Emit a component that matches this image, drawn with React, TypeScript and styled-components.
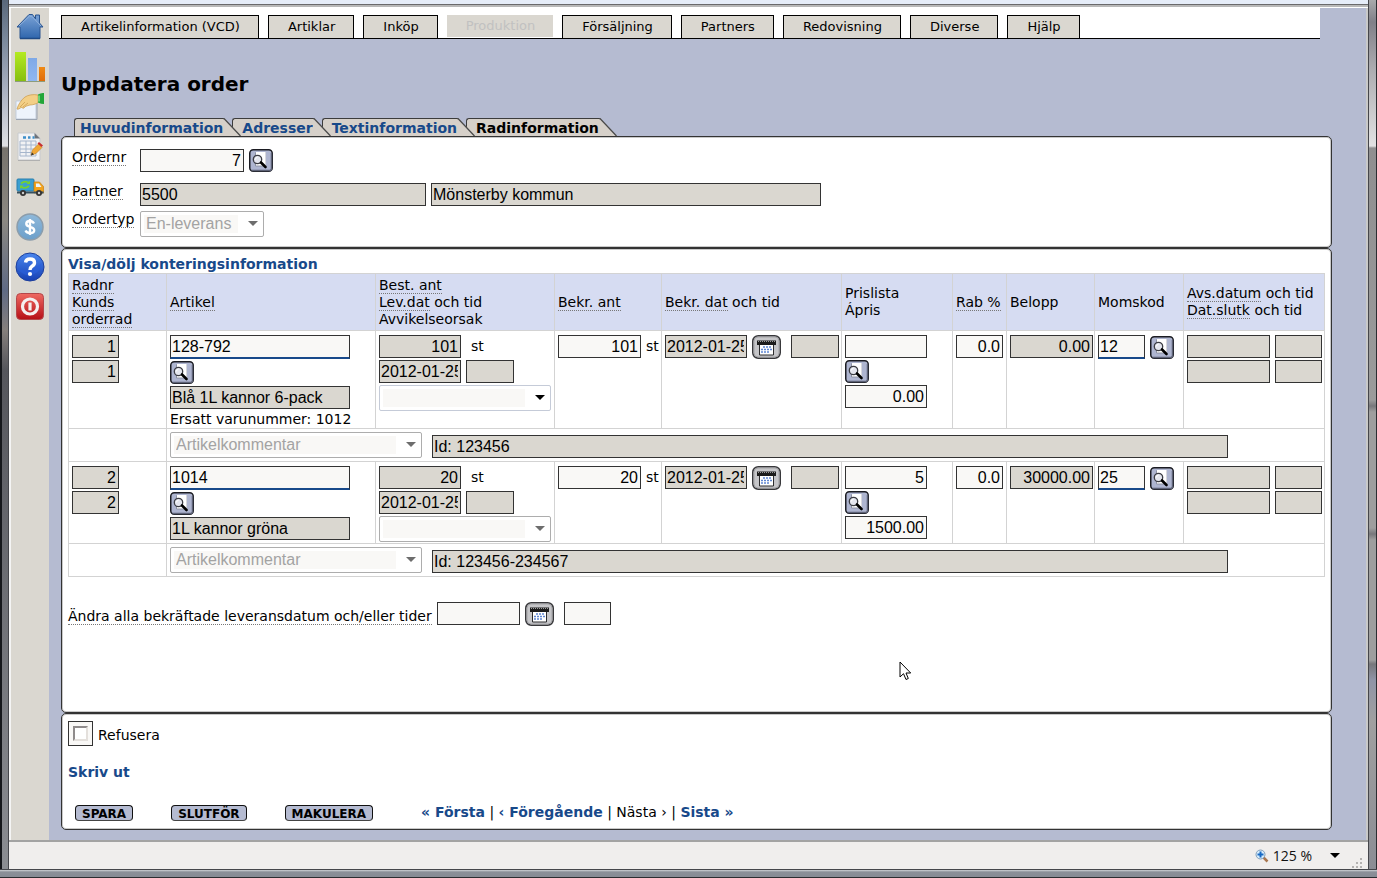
import React from "react";
import styled, { createGlobalStyle, css } from "styled-components";

const color = {
  page: "#b5bbd1",
  beige: "#dad7d0",
  field: "#f9f8f6",
  line: "#d3d3d3",
  dark: "#333333",
  link: "#18498a",
  head: "#d6dcf2",
};

const uiFont = '"DejaVu Sans", Verdana, sans-serif';
const fieldFont = '"Liberation Sans", Arial, sans-serif';

const GlobalStyle = createGlobalStyle`
  * { box-sizing: border-box; }
  body { margin: 0; background: #8b8f98; color: #000; font: 14px/17px ${uiFont}; }
  button, input, select { margin: 0; }
`;

/* ---------- window frame ---------- */

const Frame = styled.div`
  min-height: 100vh;
  min-width: 1377px;
  display: grid;
  grid-template-columns: 9px minmax(0, 1fr) 9px;
  grid-template-rows: 1fr 9px;
`;

const LeftEdge = styled.div`
  border-left: 2px solid #15171b;
  border-right: 1px solid #45464b;
  background: linear-gradient(#59677a 0, #7b899c 40px, #a9b0c0 90px, #dfe0e4 146px, #77736d 148px, #8b8882 220px, #5f6a84 290px, #857f7c 330px, #55565c 370px, #8b8d92 100%);
`;

const RightEdge = styled.div`
  border-left: 1px solid #45464b;
  border-right: 1px solid #2c2d31;
  background: linear-gradient(#a9a9ab 0, #808088 22px, #adadb1 70px, #e2e2e3 146px, #8f8f90 148px, #9b9b9b 400px, #77777b 406px, #9e9e9e 412px, #9e9e9e 528px, #77777b 534px, #9e9e9e 540px, #9e9e9e 660px, #77777b 664px, #8f94a6 680px, #a0a0a0 720px, #8b8d94 100%);
`;

const BottomEdge = styled.div`
  grid-column: 1 / -1;
  border-top: 1px solid #45464b;
  border-bottom: 1px solid #2c2d31;
  background: linear-gradient(#d0d2d6 0, #8b8f98 2px, #878b94 100%);
`;

const Viewport = styled.div`
  display: flex;
  flex-direction: column;
  background: #f0eeed;
`;

const ToolbarEdge = styled.div`
  height: 8px;
  background: linear-gradient(#e6edf9 0 4px, #6a6a6c 4px 5px, #b9b9b9 5px 7px, #fff 7px);
`;

const Body = styled.div`
  flex: 1;
  display: flex;
  background: ${color.page};
  border-left: 2px solid #f4f4f4;
  border-right: 2px solid #c9c9c9;
`;

const StatusBar = styled.footer`
  height: 29px;
  display: flex;
  align-items: center;
  justify-content: flex-end;
  padding-right: 4px;
  border-top: 2px solid #a3a3a3;
`;

const ZoomButton = styled.button`
  display: flex;
  align-items: center;
  gap: 4px;
  padding: 0;
  border: 0;
  background: none;
  font: 14px/20px "Open Sans", "Noto Sans", sans-serif;
  color: #111;

  svg:last-child { margin-left: 14px; }
`;

const Grip = styled.svg`
  align-self: flex-end;
  margin-left: 12px;
`;

/* ---------- left icon bar ---------- */

const Sidebar = styled.nav`
  flex: none;
  width: 38px;
  display: flex;
  flex-direction: column;
  background: ${color.beige};
`;

const SideLink = styled.a`
  height: 40px;
  display: flex;
  justify-content: center;
  padding-top: 4px;
`;

/* ---------- top menu ---------- */

const Main = styled.main`
  flex: 1;
  min-width: 0;
  display: flex;
  flex-direction: column;
`;

const Menu = styled.nav`
  display: flex;
  align-items: flex-end;
  gap: 9px;
  height: 31px;
  margin-right: 46px;
  padding-left: 12px;
  background: #fff;
  border-bottom: 1px solid #000;
`;

const MenuButton = styled.button`
  height: 23px;
  padding: 0 18px 0 19px;
  border: 1px solid #000;
  border-bottom: 0;
  background: ${color.beige};
  color: #000;
  font: 13px/20px ${uiFont};

  &:disabled {
    margin-bottom: 1px;
    height: 22px;
    border: 0;
    color: #c1c1c1;
  }
`;

const Content = styled.div`
  flex: 1;
  display: flex;
  flex-direction: column;
  padding: 32px 34px 10px 12px;
`;

const Title = styled.h1`
  margin: 0 0 21px;
  font: bold 20px/26px ${uiFont};
`;

/* ---------- tabs ---------- */

const Tabs = styled.div`
  display: flex;
  padding-left: 13px;
`;

const Tab = styled.a<{ $order: number; $active?: boolean }>`
  position: relative;
  z-index: ${(p) => p.$order};
  display: flex;
  height: 18px;
  margin-right: -9px;
  color: ${(p) => (p.$active ? "#000" : color.link)};
  font: bold 14px/19px ${uiFont};
  text-decoration: none;
  white-space: nowrap;
`;

const TabBody = styled.span<{ $first?: boolean }>`
  padding-left: ${(p) => (p.$first ? 5 : 9)}px;
  border-top: 1px solid #3c3c3c;
  border-left: 1px solid #3c3c3c;
  border-top-left-radius: 3px;
  background: #d6d0c9;
`;

/* ---------- panels ---------- */

const Panel = styled.section<{ $grow?: boolean }>`
  flex: ${(p) => (p.$grow ? "1 0 auto" : "none")};
  border: 1px solid ${color.dark};
  border-radius: 5px;
  background: #fff;
  box-shadow: inset 0 0 0 1px #c9c9c9;
`;

const OrderPanel = styled(Panel)`
  display: grid;
  grid-template-columns: 68px 1fr;
  align-items: start;
  padding: 12px 10px 10px;
`;

const RowsPanel = styled(Panel)`
  padding: 7px 6px 0;
`;

const ActionPanel = styled(Panel)`
  padding: 7px 6px 8px;
`;

const Line = styled.div<{ $space?: number }>`
  display: flex;
  align-items: center;
  gap: 5px;
  margin-bottom: ${(p) => p.$space ?? 0}px;
`;

const Term = styled.span`
  border-bottom: 1px dotted #777;
`;

const TermLabel = styled.label`
  border-bottom: 1px dotted #777;
  justify-self: start;
  line-height: 16px;
`;

const TextLink = styled.a`
  color: ${color.link};
  font-weight: bold;
  text-decoration: none;
`;

/* ---------- form controls ---------- */

const Field = styled.input<{ $w: number; $right?: boolean; $key?: boolean }>`
  flex: none;
  display: block;
  width: ${(p) => p.$w}px;
  height: 23px;
  padding: 0 2px 0 1px;
  border: 1px solid ${color.dark};
  border-radius: 0;
  outline: 0;
  background: ${color.field};
  color: #000;
  font: 16px/20px ${fieldFont};
  text-align: ${(p) => (p.$right ? "right" : "left")};

  &:read-only { background: ${color.beige}; }

  ${(p) =>
    p.$key &&
    css`
      height: 24px;
      border-bottom: 2px solid ${color.link};
    `}
`;

const SelectBox = styled.span<{ $w: number }>`
  flex: none;
  position: relative;
  display: block;
  width: ${(p) => p.$w}px;
  height: 26px;

  svg {
    position: absolute;
    right: 6px;
    top: 10px;
    pointer-events: none;
  }
`;

const Select = styled.select`
  appearance: none;
  width: 100%;
  height: 100%;
  padding: 0 26px 0 5px;
  border: 1px solid #c5cbd8;
  border-radius: 2px;
  background: linear-gradient(${color.field}, ${color.field}) no-repeat 3px 3px / calc(100% - 28px) calc(100% - 6px) #fff;
  color: #000;
  font: 16px/20px ${fieldFont};

  &:disabled {
    border-color: #adadad;
    color: #a3a3a3;
    opacity: 1;
  }
`;

const IconButton = styled.button`
  flex: none;
  display: block;
  height: 23px;
  padding: 0;
  border: 0;
  background: none;

  svg { display: block; }
`;

const CalendarSlot = styled.span`
  margin-right: 5px;
`;

const ActionButton = styled.button`
  height: 16px;
  padding: 1px 6px 0;
  border: 1px solid #111;
  border-bottom-color: #444;
  border-radius: 4px;
  background: ${color.page};
  color: #000;
  font: bold 12px/14px ${uiFont};
`;

const Buttons = styled.div`
  display: flex;
  align-items: center;
  padding-left: 7px;

  ${ActionButton} + ${ActionButton} { margin-left: 38px; }
`;

const Pager = styled.nav`
  margin-left: 48px;
  white-space: pre;
`;

const CheckFrame = styled.span`
  width: 25px;
  height: 25px;
  display: flex;
  justify-content: center;
  padding-top: 4px;
  border: 1px solid ${color.dark};
  background: ${color.field};
`;

const CheckText = styled.span`
  padding-top: 4px;
`;

const Check = styled.input`
  appearance: none;
  width: 15px;
  height: 15px;
  border: 2px solid #e4e0dc;
  border-top-color: #8f8b8b;
  border-left-color: #8f8b8b;
  background: #fff;
`;

/* ---------- order row table ---------- */

const Table = styled.table`
  width: 100%;
  table-layout: fixed;
  border-collapse: collapse;
`;

const Col = styled.col<{ $w?: number }>`
  width: ${(p) => (p.$w ? `${p.$w}px` : "auto")};
`;

const Th = styled.th`
  height: 57px;
  padding: 1px 0 1px 3px;
  border: 1px solid ${color.line};
  background: ${color.head};
  font-weight: normal;
  text-align: left;
  white-space: nowrap;
`;

const Td = styled.td`
  padding: 4px 0 1px 3px;
  border: 1px solid ${color.line};
  vertical-align: top;
  white-space: nowrap;
`;

const CommentTd = styled(Td)`
  padding: 3px 0 3px 3px;
`;

const Stack = styled.div`
  display: flex;
  flex-direction: column;
  align-items: flex-start;
  gap: 2px;
`;

const CommentLine = styled.div`
  display: flex;
  align-items: flex-end;
  gap: 10px;
`;

const Note = styled.span`
  line-height: 16px;
`;

const Unit = styled.span<{ $wide?: boolean }>`
  padding-left: ${(p) => (p.$wide ? 5 : 0)}px;
`;

const BulkLine = styled(Line)`
  margin: 25px 0 78px;

  ${TermLabel} { margin-top: 6px; }
`;

const Cursor = styled.svg`
  position: absolute;
  left: 899px;
  top: 661px;
  pointer-events: none;
`;

/* ---------- drawings ---------- */

const SearchIcon = () => (
  <svg width="24" height="23" viewBox="0 0 24 23" aria-hidden="true">
    <rect x=".75" y=".75" width="22.500" height="21.500" rx="3.500" fill="#aeb5d0" stroke="#1b1c22" strokeWidth="1.500" />
    <path d="M2.500 21.500h18q2 0 2-2V4" fill="none" stroke="#5d6276" strokeWidth="1.500" />
    <rect x="7" y="3" width="10" height="14" fill="#fff" />
    <path d="M6.500 3.500v13.500h8" fill="none" stroke="#8d92a2" />
    <path d="M16.500 3v13" stroke="#d8d8dc" />
    <circle cx="8.500" cy="10.500" r="4.200" fill="#e4e6ee" stroke="#3c3d44" strokeWidth="1.300" />
    <path d="M6.300 10.500q.2-2 2.200-2.200" stroke="#fff" fill="none" />
    <path d="M12 13.500l4.500 4.500" stroke="#000" strokeWidth="2.600" strokeLinecap="round" />
  </svg>
);

const CalendarIcon = () => (
  <svg width="29" height="24" viewBox="0 0 29 24" aria-hidden="true">
    <rect x=".75" y=".75" width="27.500" height="22.500" rx="5.500" fill="#c6c6c9" stroke="#38383b" strokeWidth="1.500" />
    <rect x="2" y="2" width="25" height="20" rx="4" fill="none" stroke="#a3a3a6" />
    <path d="M7.500 9h14v11h-14z" fill="#fff" stroke="#2c2c2e" />
    <path d="M5 5.500h19v4.500H5z" fill="#1c1c1c" />
    <path d="M6 6.500h17" stroke="#9c9c9c" strokeDasharray="1 1" />
    <path d="M11 12h9M9 14.500h11M9 17h9" stroke="#5f86d2" strokeWidth="1.500" strokeDasharray="2 1" />
  </svg>
);

const Arrow = ({ fill }: { fill: string }) => (
  <svg width="10" height="5" viewBox="0 0 10 5" aria-hidden="true">
    <path d="M0 0h10L5 5z" fill={fill} />
  </svg>
);

const Gradient = ({ id, from, to }: { id: string; from: string; to: string }) => (
  <linearGradient id={id} x1="0" y1="0" x2="0" y2="1">
    <stop offset="0" stopColor={from} />
    <stop offset="1" stopColor={to} />
  </linearGradient>
);

const sideIcons: { label: string; art: React.ReactNode }[] = [
  {
    label: "Hem",
    art: (
      <>
        <defs><Gradient id="home" from="#7ba3d6" to="#2f66ad" /></defs>
        <path d="M14 2.500L2 15h3v11.500h20V15h3l-3.500-4V3h-4v4l-3-4.500z" fill="url(#home)" stroke="#2a5590" strokeLinejoin="round" />
        <path d="M5 26.500h20" stroke="#1f4a85" strokeWidth="1.500" />
        <path d="M4 14L14.500 4l3 1L26 14" stroke="#8fb1dd" fill="none" />
      </>
    ),
  },
  {
    label: "Statistik",
    art: (
      <>
        <defs>
          <Gradient id="green" from="#b4ea22" to="#86bf10" />
          <Gradient id="blue" from="#7fa9e6" to="#8fb7f2" />
          <Gradient id="orange" from="#f08a14" to="#e06c08" />
        </defs>
        <rect x="0" y="0" width="11" height="29" fill="url(#green)" />
        <rect x="13" y="6" width="9" height="23" fill="url(#blue)" />
        <rect x="24" y="15" width="6" height="14" fill="url(#orange)" />
        <path d="M0 29.500h30" stroke="#8d9c7c" />
      </>
    ),
  },
  {
    label: "Partners",
    art: (
      <>
        <path d="M1 9h20v18H1z" fill="#eef4fc" stroke="#c3cddb" />
        <path d="M1 27.500h21V12" fill="none" stroke="#9aa4b2" />
        <path d="M2 17c1-4 4-9 8-12 3-2 8-3 13-2v8c-3 1-5 2-8 2-3 1-5 1-6 3-2 1-2-1-2-1-2 1-4 3-5 2z" fill="#f3cf86" stroke="#c99a4b" strokeWidth=".7" />
        <path d="M5 15l5-5M8 15l5-4" stroke="#c99a4b" strokeWidth=".7" />
        <path d="M23 2.500q3-2 6-1.500v11q-3 0-6-1.500z" fill="#23a637" />
        <path d="M24 3.500v6" stroke="#8be08e" strokeWidth="1.500" />
      </>
    ),
  },
  {
    label: "Order",
    art: (
      <>
        <path d="M3 1h17l5 5v22H3z" fill="#f1f2f4" stroke="#c8cacd" />
        <path d="M19.500 1l5.500 5.500h-5.500z" fill="#6e7278" />
        <path d="M3 28.500h22" stroke="#b0b0b0" />
        <path d="M5 9h16v15H5zM5 13h16M5 17h16M5 20.500h16M11 9v15M16 9v15" fill="none" stroke="#a6b6cc" />
        <path d="M8 5.500h3M13 5.500h2.500M17.500 5.500h2" stroke="#3d8fc9" strokeWidth="2.500" />
        <path d="M16 23l1.500-5 6-6 3.500 3.500-6 6z" fill="#f0a735" stroke="#c57f1d" strokeWidth=".6" />
        <path d="M22.500 11.500L24 10l4 3.500-1.500 1.500z" fill="#c72f2f" />
        <path d="M16 23.500l1-3 2 2z" fill="#333" />
      </>
    ),
  },
  {
    label: "Leverans",
    art: (
      <>
        <rect x="2" y="7" width="17" height="12" rx="1" fill="#3b9fd0" stroke="#2a7fae" />
        <path d="M19 10h5.500l4 4.500V21H19z" fill="#f2a31c" stroke="#c98112" strokeWidth=".7" />
        <path d="M21 11.500h3l2.500 3.500H21z" fill="#e9f4fb" />
        <path d="M2 19.500h26.500v2H2z" fill="#36505f" />
        <path d="M6 11.500q4-3.500 8-.5M14 14q-4 3.500-8 .5" fill="none" stroke="#75d131" strokeWidth="1.800" />
        <path d="M15 8.500v3.500h-3.500zM5 17v-3.500h3.500z" fill="#75d131" />
        <circle cx="8" cy="21" r="3" fill="#333" /><circle cx="8" cy="21" r="1.200" fill="#ccc" />
        <circle cx="24" cy="21" r="3" fill="#333" /><circle cx="24" cy="21" r="1.200" fill="#ccc" />
      </>
    ),
  },
  {
    label: "Redovisning",
    art: (
      <>
        <defs><Gradient id="coin" from="#8fb9da" to="#6c9fca" /></defs>
        <circle cx="15" cy="15" r="13" fill="url(#coin)" stroke="#8c9dab" strokeWidth="1.500" />
        <path d="M19 11.500q-1.500-2.500-4-2.500-3.700 0-3.700 2.800 0 2.200 3.700 3 4.200.9 4.200 3.400 0 2.800-4.200 2.800-3.300 0-4.500-2.500M15 7v16" fill="none" stroke="#fff" strokeWidth="2.400" />
      </>
    ),
  },
  {
    label: "Hjälp",
    art: (
      <>
        <defs><Gradient id="help" from="#4a86ee" to="#1740b4" /></defs>
        <circle cx="15" cy="15" r="14" fill="url(#help)" stroke="#1d3f9c" />
        <path d="M3 17Q14 21 27 11a13 13 0 0 1-24 6z" fill="#2a5fdc" opacity=".6" />
        <path d="M10.500 10.500q.5-3.500 4.500-3.500 4.500 0 4.500 3.700 0 2-2.500 3.500-2 1.300-2 3.800" fill="none" stroke="#fff" strokeWidth="3.400" />
        <circle cx="15" cy="22" r="2.100" fill="#fff" />
      </>
    ),
  },
  {
    label: "Logga ut",
    art: (
      <>
        <defs><Gradient id="power" from="#ee6a62" to="#b60f16" /></defs>
        <rect x="1.500" y="1.500" width="27" height="26" rx="4" fill="url(#power)" stroke="#b4474a" />
        <circle cx="15" cy="14.500" r="7.500" fill="none" stroke="#f4efef" strokeWidth="3.200" />
        <path d="M15 10.500v8" stroke="#f4efef" strokeWidth="3.200" />
      </>
    ),
  },
];

/* ---------- data ---------- */

const menuItems = [
  "Artikelinformation (VCD)", "Artiklar", "Inköp", "Produktion", "Försäljning",
  "Partners", "Redovisning", "Diverse", "Hjälp",
];

const tabs = ["Huvudinformation", "Adresser", "Textinformation", "Radinformation"];

const columnWidths = [98, 209, 179, 107, 180, 111, 54, 88, 89, undefined];

interface OrderRow {
  nr: string; item: string; name: string; note?: string; qty: string; date: string;
  reasonLocked: boolean; priceList: string; price: string; discount: string;
  amount: string; vat: string; comment: string;
}

const rows: OrderRow[] = [
  {
    nr: "1", item: "128-792", name: "Blå 1L kannor 6-pack", note: "Ersatt varunummer: 1012",
    qty: "101", date: "2012-01-25", reasonLocked: false, priceList: "", price: "0.00",
    discount: "0.0", amount: "0.00", vat: "12", comment: "Id: 123456",
  },
  {
    nr: "2", item: "1014", name: "1L kannor gröna", qty: "20", date: "2012-01-25",
    reasonLocked: true, priceList: "5", price: "1500.00", discount: "0.0",
    amount: "30000.00", vat: "25", comment: "Id: 123456-234567",
  },
];

/* ---------- pieces ---------- */

interface DropdownProps { id?: string; label?: string; width: number; value: string; disabled?: boolean }

const Dropdown = ({ id, label, width, value, disabled }: DropdownProps) => (
  <SelectBox $w={width}>
    <Select id={id} aria-label={label} disabled={disabled}>
      <option>{value}</option>
    </Select>
    <Arrow fill={disabled ? "#6d6d6d" : "#000"} />
  </SelectBox>
);

const SearchButton = ({ label }: { label: string }) => (
  <IconButton type="button" aria-label={label}><SearchIcon /></IconButton>
);

const CalendarButton = () => (
  <CalendarSlot>
    <IconButton type="button" aria-label="Välj datum"><CalendarIcon /></IconButton>
  </CalendarSlot>
);

const OrderRowView = ({ row }: { row: OrderRow }) => (
  <>
    <tr>
      <Td>
        <Stack>
          <Field $w={47} $right readOnly aria-label="Radnr" defaultValue={row.nr} />
          <Field $w={47} $right readOnly aria-label="Kunds orderrad" defaultValue={row.nr} />
        </Stack>
      </Td>
      <Td>
        <Stack>
          <Field $w={180} $key aria-label="Artikel" defaultValue={row.item} />
          <SearchButton label="Sök artikel" />
          <Field $w={180} readOnly aria-label="Benämning" defaultValue={row.name} />
          {row.note && <Note>{row.note}</Note>}
        </Stack>
      </Td>
      <Td>
        <Stack>
          <Line>
            <Field $w={82} $right readOnly aria-label="Best. ant" defaultValue={row.qty} />
            <Unit $wide>st</Unit>
          </Line>
          <Line>
            <Field $w={82} readOnly aria-label="Lev.dat" defaultValue={row.date} />
            <Field $w={48} readOnly aria-label="Lev.tid" />
          </Line>
          <Dropdown label="Avvikelseorsak" width={172} value="" disabled={row.reasonLocked} />
        </Stack>
      </Td>
      <Td>
        <Line>
          <Field $w={83} $right aria-label="Bekr. ant" defaultValue={row.qty} />
          <Unit>st</Unit>
        </Line>
      </Td>
      <Td>
        <Line>
          <Field $w={82} readOnly aria-label="Bekr. dat" defaultValue={row.date} />
          <CalendarButton />
          <Field $w={48} readOnly aria-label="Bekr. tid" />
        </Line>
      </Td>
      <Td>
        <Stack>
          <Field $w={82} $right aria-label="Prislista" defaultValue={row.priceList} />
          <SearchButton label="Sök prislista" />
          <Field $w={82} $right aria-label="Ápris" defaultValue={row.price} />
        </Stack>
      </Td>
      <Td><Field $w={47} $right aria-label="Rab %" defaultValue={row.discount} /></Td>
      <Td><Field $w={83} $right readOnly aria-label="Belopp" defaultValue={row.amount} /></Td>
      <Td>
        <Line>
          <Field $w={47} $key aria-label="Momskod" defaultValue={row.vat} />
          <SearchButton label="Sök momskod" />
        </Line>
      </Td>
      <Td>
        <Stack>
          <Line>
            <Field $w={83} readOnly aria-label="Avs.datum" />
            <Field $w={47} readOnly aria-label="Avs.tid" />
          </Line>
          <Line>
            <Field $w={83} readOnly aria-label="Dat.slutk" />
            <Field $w={47} readOnly aria-label="Tid slutk" />
          </Line>
        </Stack>
      </Td>
    </tr>
    <tr>
      <CommentTd />
      <CommentTd colSpan={9}>
        <CommentLine>
          <Dropdown label="Kommentarstyp" width={252} value="Artikelkommentar" disabled />
          <Field $w={796} readOnly aria-label="Kommentar" defaultValue={row.comment} />
        </CommentLine>
      </CommentTd>
    </tr>
  </>
);

export default function App() {
  return (
    <Frame>
      <GlobalStyle />
      <LeftEdge />
      <Viewport>
        <ToolbarEdge />
        <Body>
          <Sidebar>
            {sideIcons.map((icon) => (
              <SideLink key={icon.label} href="#" aria-label={icon.label}>
                <svg width="30" height="30" viewBox="0 0 30 30" aria-hidden="true">{icon.art}</svg>
              </SideLink>
            ))}
          </Sidebar>
          <Main>
            <Menu>
              {menuItems.map((item) => (
                <MenuButton key={item} type="button" disabled={item === "Produktion"}>{item}</MenuButton>
              ))}
            </Menu>
            <Content>
              <Title>Uppdatera order</Title>
              <Tabs>
                {tabs.map((tab, i) => (
                  <Tab key={tab} href="#" $order={tabs.length - i} $active={i === 3}>
                    <TabBody $first={i === 0}>{tab}</TabBody>
                    <svg width="18" height="18" viewBox="0 0 18 18" aria-hidden="true">
                      <path d="M0 0L1 0L18 18H0z" fill="#d6d0c9" />
                      <path d="M0 .5h1L17.500 18" fill="none" stroke="#4a4a4a" strokeWidth="1.300" />
                    </svg>
                  </Tab>
                ))}
              </Tabs>

              <OrderPanel>
                <TermLabel htmlFor="ordernr">Ordernr</TermLabel>
                <Line $space={11}>
                  <Field id="ordernr" $w={104} $right defaultValue="7" />
                  <SearchButton label="Sök order" />
                </Line>
                <TermLabel htmlFor="partner">Partner</TermLabel>
                <Line $space={5}>
                  <Field id="partner" $w={286} readOnly defaultValue="5500" />
                  <Field $w={390} readOnly aria-label="Partnernamn" defaultValue="Mönsterby kommun" />
                </Line>
                <TermLabel htmlFor="ordertyp">Ordertyp</TermLabel>
                <Dropdown id="ordertyp" width={124} value="En-leverans" disabled />
              </OrderPanel>

              <RowsPanel $grow>
                <TextLink href="#">Visa/dölj konteringsinformation</TextLink>
                <Table>
                  <colgroup>
                    {columnWidths.map((w, i) => <Col key={i} $w={w} />)}
                  </colgroup>
                  <thead>
                    <tr>
                      <Th><Term>Radnr</Term><br /><Term>Kunds </Term><br /><Term>orderrad</Term></Th>
                      <Th><Term>Artikel</Term></Th>
                      <Th><Term>Best. ant</Term><br /><Term>Lev.dat</Term> och tid<br />Avvikelseorsak</Th>
                      <Th><Term>Bekr. ant</Term></Th>
                      <Th><Term>Bekr. dat</Term> och tid</Th>
                      <Th>Prislista<br />Ápris</Th>
                      <Th><Term>Rab %</Term></Th>
                      <Th>Belopp</Th>
                      <Th>Momskod</Th>
                      <Th><Term>Avs.datum</Term> och tid<br /><Term>Dat.slutk</Term> och tid</Th>
                    </tr>
                  </thead>
                  <tbody>
                    {rows.map((row) => <OrderRowView key={row.nr} row={row} />)}
                  </tbody>
                </Table>
                <BulkLine>
                  <TermLabel htmlFor="bulkdate">Ändra alla bekräftade leveransdatum och/eller tider</TermLabel>
                  <Field id="bulkdate" $w={83} />
                  <CalendarButton />
                  <Field $w={47} aria-label="Leveranstid" />
                </BulkLine>
              </RowsPanel>

              <ActionPanel>
                <Line as="label" $space={18}>
                  <CheckFrame><Check type="checkbox" /></CheckFrame>
                  <CheckText>Refusera</CheckText>
                </Line>
                <Line $space={23}><TextLink href="#">Skriv ut</TextLink></Line>
                <Buttons>
                  <ActionButton type="button">SPARA</ActionButton>
                  <ActionButton type="button">SLUTFÖR</ActionButton>
                  <ActionButton type="button">MAKULERA</ActionButton>
                  <Pager>
                    <TextLink href="#">« Första</TextLink> | <TextLink href="#">‹ Föregående</TextLink>
                    {" | Nästa › | "}
                    <TextLink href="#">Sista »</TextLink>
                  </Pager>
                </Buttons>
              </ActionPanel>
            </Content>
          </Main>
        </Body>
        <StatusBar>
          <ZoomButton type="button">
            <svg width="14" height="14" viewBox="0 0 14 14" aria-hidden="true">
              <path d="M8.500 8.500l4 4" stroke="#a9764f" strokeWidth="2.500" />
              <circle cx="5.500" cy="5.500" r="4.500" fill="#d8ecfb" stroke="#7f9db8" />
              <path d="M5.500 2.500v6M2.500 5.500h6" stroke="#1769c4" strokeWidth="2" />
            </svg>
            125 %
            <Arrow fill="#000" />
          </ZoomButton>
          <Grip width="12" height="12" viewBox="0 0 12 12" aria-hidden="true">
            <path d="M8 1h2v2H8zM4 5h2v2H4zM8 5h2v2H8zM0 9h2v2H0zM4 9h2v2H4zM8 9h2v2H8z" fill="#b4b2b1" />
          </Grip>
        </StatusBar>
      </Viewport>
      <RightEdge />
      <BottomEdge />
      <Cursor width="14" height="20" viewBox="0 0 14 20" aria-hidden="true">
        <path d="M1 1v15l3.500-3.300L7 18.500l2.300-1L7 12h4.700z" fill="#fff" stroke="#000" />
      </Cursor>
    </Frame>
  );
}
